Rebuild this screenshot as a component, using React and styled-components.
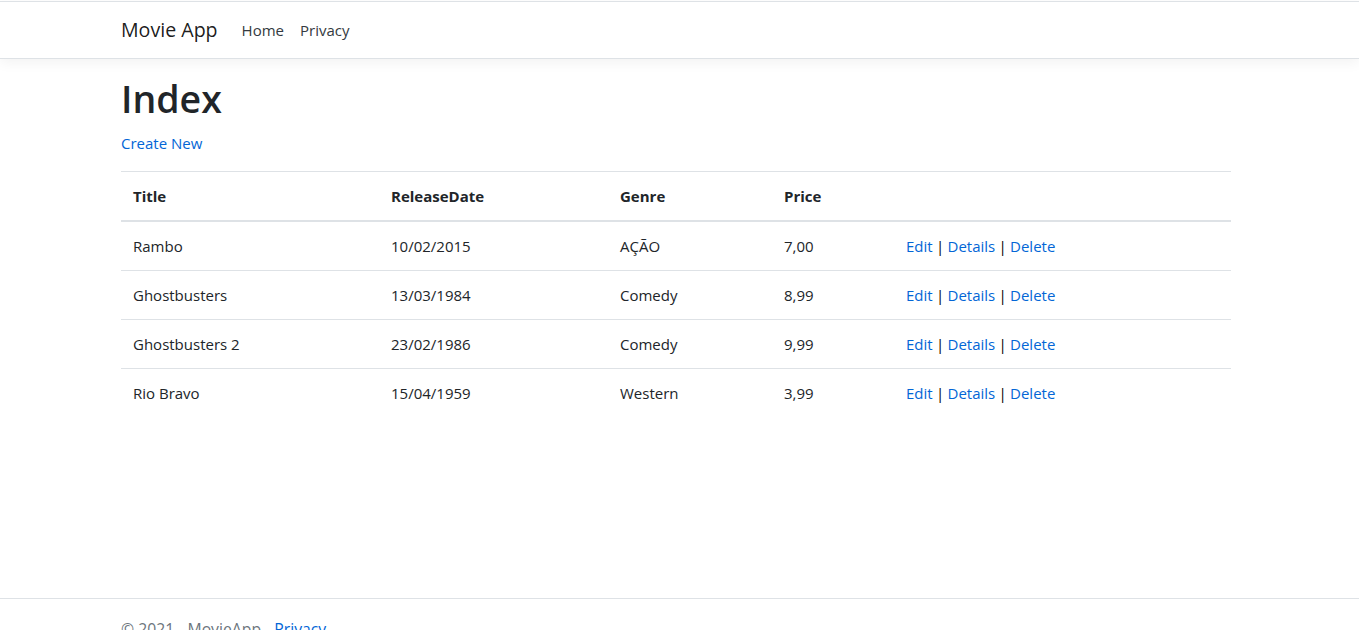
import styled, { createGlobalStyle } from "styled-components";

const movies = [
  { title: "Rambo", date: "10/02/2015", genre: "AÇÃO", price: "7,00" },
  { title: "Ghostbusters", date: "13/03/1984", genre: "Comedy", price: "8,99" },
  { title: "Ghostbusters 2", date: "23/02/1986", genre: "Comedy", price: "9,99" },
  { title: "Rio Bravo", date: "15/04/1959", genre: "Western", price: "3,99" },
];

const GlobalStyle = createGlobalStyle`
  html {
    overflow: hidden;
  }
  body {
    margin: 0;
    font-family: "Open Sans", "Liberation Sans", sans-serif;
    font-size: 15px;
    line-height: 24px;
    color: #212529;
    background: #fff;
  }
  * {
    box-sizing: border-box;
  }
`;

const Page = styled.div`
  display: flex;
  flex-direction: column;
  min-height: 659px;
  padding-top: 1px;
`;

const Header = styled.header`
  border-top: 1px solid #dee2e6;
  border-bottom: 1px solid #dee2e6;
  box-shadow: 0 4px 12px rgba(0, 0, 0, 0.05);
  margin-bottom: 16px;
`;

const Container = styled.div`
  max-width: 1147px;
  margin: 0 auto;
  padding: 0 22px 0 15px;
  width: 100%;
`;

const Navbar = styled(Container)`
  display: flex;
  align-items: center;
  padding-top: 8px;
  padding-bottom: 8px;
`;

const Brand = styled.a`
  font-size: 19.6px;
  line-height: 30px;
  padding: 5px 0;
  margin-right: 16px;
  color: rgba(0, 0, 0, 0.9);
  text-decoration: none;
  white-space: nowrap;
`;

const NavLink = styled.a`
  padding: 8px;
  color: #343a40;
  text-decoration: none;
`;

const Main = styled(Container)`
  flex: 1;
  padding-bottom: 48px;
`;

const Title = styled.h1`
  font-size: 37.5px;
  font-weight: 600;
  line-height: 48px;
  margin: 0 0 8px;
`;

const Paragraph = styled.p`
  margin: 0 0 16px;
`;

const Link = styled.a`
  color: #0366d6;
  text-decoration: none;
`;

const Table = styled.table`
  width: 100%;
  border-collapse: collapse;
  color: #212529;
`;

const Th = styled.th`
  text-align: left;
  font-weight: 700;
  padding: 12px;
  border-top: 1px solid #dee2e6;
  border-bottom: 2px solid #dee2e6;
  width: ${(p) => p.$w || "auto"};
`;

const Td = styled.td`
  padding: 12px;
  border-top: 1px solid #dee2e6;
  vertical-align: top;
`;

const Actions = styled(Td)`
  word-spacing: -0.6px;
`;

const Sep = styled.span`
  color: #000;
`;

const Footer = styled.footer`
  border-top: 1px solid #dee2e6;
  line-height: 60px;
  font-size: 15.75px;
  color: #6c757d;
  white-space: nowrap;
`;

export default function App() {
  return (
    <>
      <GlobalStyle />
      <Page>
        <Header>
          <Navbar as="nav">
            <Brand href="#">Movie App</Brand>
            <NavLink href="#">Home</NavLink>
            <NavLink href="#">Privacy</NavLink>
          </Navbar>
        </Header>
        <Main as="main">
          <Title>Index</Title>
          <Paragraph>
            <Link href="#">Create New</Link>
          </Paragraph>
          <Table>
            <thead>
              <tr>
                <Th $w="258px">Title</Th>
                <Th $w="229px">ReleaseDate</Th>
                <Th $w="164px">Genre</Th>
                <Th $w="122px">Price</Th>
                <Th></Th>
              </tr>
            </thead>
            <tbody>
              {movies.map((m) => (
                <tr key={m.title}>
                  <Td>{m.title}</Td>
                  <Td>{m.date}</Td>
                  <Td>{m.genre}</Td>
                  <Td>{m.price}</Td>
                  <Actions>
                    <Link href="#">Edit</Link> <Sep>|</Sep>{" "}
                    <Link href="#">Details</Link> <Sep>|</Sep>{" "}
                    <Link href="#">Delete</Link>
                  </Actions>
                </tr>
              ))}
            </tbody>
          </Table>
        </Main>
        <Footer>
          <Container>
            &copy; 2021 - MovieApp - <Link href="#">Privacy</Link>
          </Container>
        </Footer>
      </Page>
    </>
  );
}
